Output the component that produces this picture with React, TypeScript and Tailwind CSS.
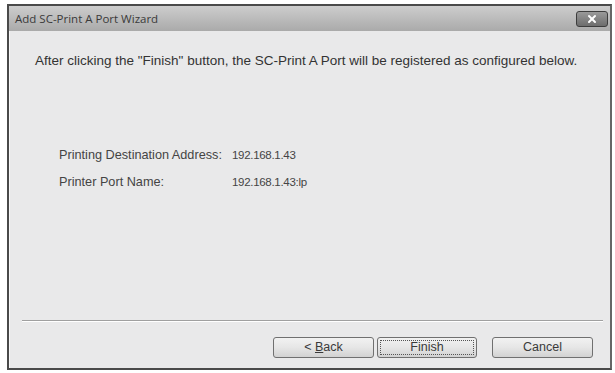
import { X } from "lucide-react";

const rows = [
  { label: "Printing Destination Address:", value: "192.168.1.43" },
  { label: "Printer Port Name:", value: "192.168.1.43:lp" },
];

function WizardButton({
  children,
  focused,
  width = "w-[101px]",
}: {
  children: React.ReactNode;
  focused?: boolean;
  width?: string;
}) {
  return (
    <button
      className={
        "flex h-[21px] items-center justify-center rounded-[3px] border border-[#707070] bg-gradient-to-b from-[#f2f2f2] via-[#e6e6e6] to-[#d2d2d2] text-[12.5px] text-[#3a3a3a] " +
        width +
        (focused ? " outline outline-1 outline-dotted outline-[#555] outline-offset-[-4px]" : "")
      }
    >
      <span>{children}</span>
    </button>
  );
}

export default function App() {
  return (
    <main className="h-[373px] w-[615px] bg-white pl-[7px] pr-[3px] pt-[4px] pb-[3px] font-['Liberation_Sans',Arial,sans-serif]">
      <div className="flex h-full flex-col border-2 border-[#4a4a4a] border-r-[#666] bg-[#e9e9ea]">
        <div className="flex h-[25px] items-center justify-between bg-gradient-to-b from-[#cdcdcd] to-[#aaaaaa] pl-[6px] pr-[2px]">
          <span className="font-['Open_Sans',sans-serif] text-[11.5px] text-[#3a3a3a]">
            Add SC-Print A Port Wizard
          </span>
          <div className="flex h-[16px] w-[32px] items-center justify-center rounded-[3px] border border-[#3d3d3d] bg-gradient-to-b from-[#9a9a9a] to-[#6d6d6d]">
            <X size={12} strokeWidth={4} className="text-white" />
          </div>
        </div>

        <div className="flex flex-1 flex-col border-l border-[#f7f7f7]">
          <p className="ml-[25px] mt-[20px] text-[13.5px] text-[#333]">
            After clicking the "Finish" button, the SC-Print A Port will be registered as configured below.
          </p>

          <div className="ml-[49px] mt-[77px] flex flex-col gap-[12px] text-[12.7px] text-[#444]">
            {rows.map((r) => (
              <div key={r.label} className="flex h-[15px] items-center">
                <span className="w-[173px]">{r.label}</span>
                <span className="text-[11.5px] tracking-[-0.3px]">{r.value}</span>
              </div>
            ))}
          </div>

          <div className="flex-1" />

          <div className="ml-[12px] mr-[7px] border-t border-[#a0a0a0] border-b border-b-white" />

          <div className="flex justify-end pr-[17px] pt-[15px] pb-[10px]">
            <WizardButton>&lt; <span className="underline">B</span>ack</WizardButton>
            <div className="w-[3px]" />
            <WizardButton focused width="w-[100px]">
              Finish
            </WizardButton>
            <div className="w-[15px]" />
            <WizardButton>Cancel</WizardButton>
          </div>
        </div>
      </div>
    </main>
  );
}
